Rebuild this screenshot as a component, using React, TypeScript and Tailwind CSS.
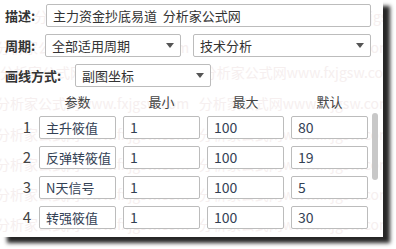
import React from "react";

const font = { fontFamily: '"Noto Sans CJK SC", "Noto Sans", sans-serif' };

const params = [
  { name: "主升筱值", min: "1", max: "100", def: "80" },
  { name: "反弹转筱值", min: "1", max: "100", def: "19" },
  { name: "N天信号", min: "1", max: "100", def: "5" },
  { name: "转强筱值", min: "1", max: "100", def: "30" },
];

// faint watermark lines: [top, left offset]
const marks: [number, number][] = [
  [6, 34], [37, -4], [62, 0], [93, -4], [124, -4], [154, -4], [184, -4], [214, -4],
];

function Arrow() {
  return (
    <svg width="8" height="5" viewBox="0 0 8 5" className="shrink-0">
      <path d="M0 0h8L4 5z" fill="#555" />
    </svg>
  );
}

function Select({ value, w }: { value: string; w: string }) {
  return (
    <div
      className={`${w} h-[23px] border border-[#bcbcbc] rounded-[2px] bg-white flex items-center justify-between pl-[6px] pr-[6px] text-[13px] text-[#333]`}
    >
      <span>{value}</span>
      <Arrow />
    </div>
  );
}

function Box({ value, num }: { value: string; num?: boolean }) {
  return (
    <div
      className={`w-[77px] h-[23px] border border-[#bcbcbc] rounded-[2px] bg-white flex items-center pl-[6px] text-[#334155] ${num ? "text-[14px]" : "text-[13px]"}`}
    >
      {value}
    </div>
  );
}

export default function App() {
  return (
    <div className="w-[396px] h-[249px] bg-white" style={font}>
      <div className="relative w-[383px] h-[237px] bg-white overflow-hidden shadow-[7px_6px_4px_rgba(0,0,0,0.85)]">
        {/* watermark */}
        <div className="absolute inset-0 pointer-events-none z-0">
          {marks.map(([t, l], i) => (
            <div
              key={i}
              className="absolute whitespace-nowrap text-[14px] text-[#f6efef]"
              style={{ top: t, left: l }}
            >
              分析家公式网www.fxjgsw.com&nbsp;&nbsp;&nbsp;分析家公式网www.fxjgsw.com
            </div>
          ))}
        </div>

        <div className="relative z-10 flex flex-col pt-[4px]">
          <div className="flex items-center h-[23px]">
            <span className="w-[46px] pl-[5px] text-[13px] font-bold text-[#333]">描述:</span>
            <div className="w-[325px] h-[23px] border border-[#bcbcbc] rounded-[2px] bg-white flex items-center pl-[6px] text-[13px] text-[#333]">
              主力资金抄底易道&nbsp;&nbsp;分析家公式网
            </div>
          </div>

          <div className="flex items-center h-[23px] mt-[7px]">
            <span className="w-[45px] pl-[5px] text-[13px] font-bold text-[#333]">周期:</span>
            <Select value="全部适用周期" w="w-[136px]" />
            <div className="w-[12px]" />
            <Select value="技术分析" w="w-[178px]" />
          </div>

          <div className="flex items-center h-[23px] mt-[7px]">
            <span className="w-[75px] pl-[5px] text-[13px] font-bold text-[#333]">画线方式:</span>
            <Select value="副图坐标" w="w-[136px]" />
          </div>

          <div className="flex items-center h-[14px] mt-[8px] text-[13px] text-[#444]">
            <div className="w-[39px]" />
            <div className="w-[77px] text-center">参数</div>
            <div className="w-[7px]" />
            <div className="w-[77px] text-center">最小</div>
            <div className="w-[7px]" />
            <div className="w-[77px] text-center">最大</div>
            <div className="w-[7px]" />
            <div className="w-[77px] text-center">默认</div>
          </div>

          <div className="flex mt-[7px]">
            <div className="flex flex-col gap-[7px]">
              {params.map((p, i) => (
                <div key={i} className="flex items-center gap-[7px] h-[23px]">
                  <div className="w-[32px] text-right pr-[1px] text-[15px] text-[#444]">{i + 1}</div>
                  <Box value={p.name} />
                  <Box value={p.min} num />
                  <Box value={p.max} num />
                  <Box value={p.def} num />
                </div>
              ))}
            </div>
            <div className="ml-[4px] mt-[-3px] w-[6px] h-[67px] rounded-full bg-[#c8c8c8]" />
          </div>
        </div>
      </div>
    </div>
  );
}
